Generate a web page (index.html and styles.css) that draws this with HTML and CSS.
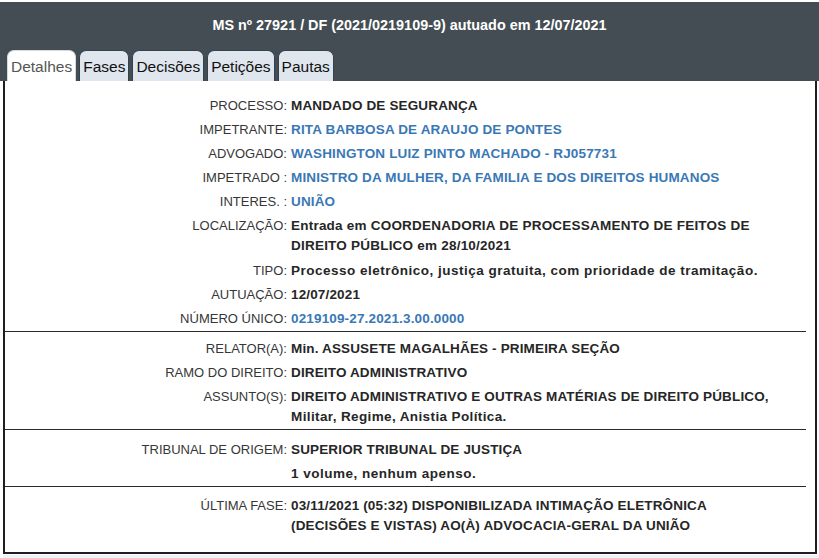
FILE: index.html
```html
<!DOCTYPE html>
<html lang="pt-BR">
<head>
    <meta charset="UTF-8">
    <meta name="viewport" content="width=device-width, initial-scale=1.0">
    <link rel="stylesheet" href="styles.css">
</head>
<body>

<div class="topo">
    <h1 class="titulo">MS nº 27921 / DF (2021/0219109-9) autuado em 12/07/2021</h1>
    <ul class="abas">
        <li class="aba ativa">Detalhes</li>
        <li class="aba">Fases</li>
        <li class="aba">Decisões</li>
        <li class="aba">Petições</li>
        <li class="aba">Pautas</li>
    </ul>
</div>

<div class="painel">
    <div class="bloco bloco-processo">
        <div class="linha"><span class="rotulo">PROCESSO:</span><span class="valor">MANDADO DE SEGURANÇA</span></div>
        <div class="linha"><span class="rotulo">IMPETRANTE:</span><span class="valor link">RITA BARBOSA DE ARAUJO DE PONTES</span></div>
        <div class="linha"><span class="rotulo">ADVOGADO:</span><span class="valor link">WASHINGTON LUIZ PINTO MACHADO - RJ057731</span></div>
        <div class="linha"><span class="rotulo">IMPETRADO :</span><span class="valor link">MINISTRO DA MULHER, DA FAMILIA E DOS DIREITOS HUMANOS</span></div>
        <div class="linha"><span class="rotulo">INTERES. :</span><span class="valor link">UNIÃO</span></div>
        <div class="linha"><span class="rotulo">LOCALIZAÇÃO:</span><span class="valor largo">Entrada em COORDENADORIA DE PROCESSAMENTO DE FEITOS DE DIREITO PÚBLICO em 28/10/2021</span></div>
        <div class="linha"><span class="rotulo">TIPO:</span><span class="valor minusc">Processo eletrônico, justiça gratuita, com prioridade de tramitação.</span></div>
        <div class="linha"><span class="rotulo">AUTUAÇÃO:</span><span class="valor">12/07/2021</span></div>
        <div class="linha"><span class="rotulo">NÚMERO ÚNICO:</span><span class="valor link">0219109-27.2021.3.00.0000</span></div>
    </div>

    <div class="bloco bloco-relator">
        <div class="linha"><span class="rotulo">RELATOR(A):</span><span class="valor">Min. ASSUSETE MAGALHÃES - PRIMEIRA SEÇÃO</span></div>
        <div class="linha"><span class="rotulo">RAMO DO DIREITO:</span><span class="valor">DIREITO ADMINISTRATIVO</span></div>
        <div class="linha"><span class="rotulo">ASSUNTO(S):</span><span class="valor">DIREITO ADMINISTRATIVO E OUTRAS MATÉRIAS DE DIREITO PÚBLICO, <span class="minusc leve">Militar, Regime, Anistia Política.</span></span></div>
    </div>

    <div class="bloco bloco-origem">
        <div class="linha"><span class="rotulo">TRIBUNAL DE ORIGEM:</span><span class="valor">SUPERIOR TRIBUNAL DE JUSTIÇA</span></div>
        <div class="linha"><span class="rotulo"></span><span class="valor minusc">1 volume, nenhum apenso.</span></div>
    </div>

    <div class="bloco bloco-fase">
        <div class="linha"><span class="rotulo">ÚLTIMA FASE:</span><span class="valor">03/11/2021 (05:32) DISPONIBILIZADA INTIMAÇÃO ELETRÔNICA (DECISÕES E VISTAS) AO(À) ADVOCACIA-GERAL DA UNIÃO</span></div>
    </div>
</div>

<div class="rodape"></div>

</body>
</html>
```

FILE: styles.css
```css
body {
    margin: 0;
    padding-top: 2px;
    background-color: #fff;
    font-family: "Liberation Sans", Arial, sans-serif;
    color: #222;
}

.topo {
    background-color: #434d53;
    padding-top: 14px;
}

.titulo {
    margin: 0;
    text-align: center;
    font-size: 14.4px;
    line-height: 18px;
    color: #fff;
}

.abas {
    display: flex;
    gap: 3px;
    list-style: none;
    margin: 16px 0 0;
    padding: 0 0 0 7px;
}

.aba {
    padding: 2px 3px 0;
    font-size: 15.5px;
    line-height: 28px;
    color: #111;
    background-color: #dfe6ee;
    border: 1px solid #34424f;
    border-bottom: 0;
    border-radius: 7px 7px 0 0;
}

.aba.ativa {
    color: #555;
    background-color: #fff;
    border-color: #d4dae0;
}

.painel {
    width: 814px;
    margin-left: 3px;
    box-sizing: border-box;
    background-color: #fff;
    border: 2px solid #1e1e1e;
    border-top: 0;
}

.bloco {
    margin-right: 9px;
    border-bottom: 1px solid #2a2a2a;
}

.bloco-processo {
    padding-top: 13px;
}

.bloco-relator {
    padding-top: 5px;
}

.bloco-origem {
    padding-top: 8px;
}

.bloco-fase {
    padding: 7px 0 14px;
    border-bottom: 0;
}

.linha {
    display: grid;
    grid-template-columns: 282px 490px;
    column-gap: 4px;
    padding: 2px 0 2.1px;
}

.rotulo {
    text-align: right;
    font-size: 13px;
    line-height: 20px;
    color: #363636;
}

.valor {
    font-size: 13.5px;
    line-height: 20px;
    font-weight: bold;
    letter-spacing: 0.15px;
    color: #262626;
}

.valor.largo {
    letter-spacing: 0.22px;
}

/* texto em minúsculas fica mais largo na tela original */
.minusc {
    letter-spacing: 0.5px;
}

.minusc.leve {
    letter-spacing: 0.38px;
}

.valor.link {
    color: #3a78b5;
}

.rodape {
    height: 4px;
    margin: 1px 0 0 3px;
    background-color: #edf3fa;
}
```
